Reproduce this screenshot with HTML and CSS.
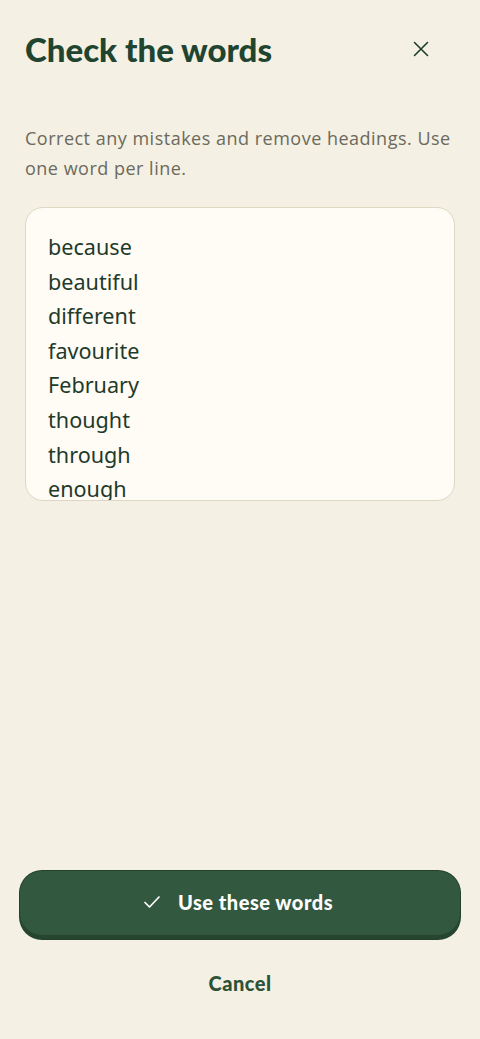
FILE: index.html
```html
<!DOCTYPE html>
<html lang="en">
<head>
<meta charset="utf-8">
<title>Check the words</title>
<link rel="stylesheet" href="styles.css">
</head>
<body>
<main class="sheet">
  <header class="head">
    <h1 class="title">Check the words</h1>
    <button class="close" aria-label="Close">
      <svg width="16" height="16" viewBox="0 0 16 16" fill="none" stroke="#1f3d2c" stroke-width="1.6" stroke-linecap="round"><path d="M1.5 1.5 L14.5 14.5 M14.5 1.5 L1.5 14.5"/></svg>
    </button>
  </header>
  <p class="hint">Correct any mistakes and remove headings. Use one word per line.</p>
  <textarea class="words" spellcheck="false">because
beautiful
different
favourite
February
thought
through
enough
friend
people</textarea>
  <div class="spacer"></div>
  <div class="actions">
    <button class="primary">
      <svg width="18" height="14" viewBox="0 0 18 14" fill="none" stroke="#ffffff" stroke-width="1.7" stroke-linecap="round" stroke-linejoin="round"><path d="M2 7.5 L6.5 12 L16 2"/></svg>
      <span>Use these words</span>
    </button>
    <button class="cancel">Cancel</button>
  </div>
</main>
</body>
</html>
```
FILE: styles.css
```css
* { box-sizing: border-box; }
html, body { margin: 0; padding: 0; }
body {
  background: #f4f0e4;
  font-family: "Open Sans", "Noto Sans", sans-serif;
  width: 480px;
  height: 1039px;
  overflow: hidden;
}
.sheet {
  display: flex;
  flex-direction: column;
  height: 1039px;
  padding: 26px 20px 0 25px;
}
.head {
  display: flex;
  align-items: center;
  justify-content: space-between;
  height: 46px;
}
.title {
  margin: 0;
  font-family: "Lato", sans-serif;
  font-weight: 900;
  font-size: 33px;
  letter-spacing: 0;
  color: #1f4430;
}
.close {
  width: 44px;
  height: 44px;
  margin-right: 17px;
  border: 0;
  background: transparent;
  display: flex;
  align-items: center;
  justify-content: center;
  padding: 0;
}
.hint {
  margin: 51px 0 0 0;
  font-size: 18px;
  letter-spacing: 0.5px;
  line-height: 30px;
  color: #6b6a5c;
  padding-right: 4px;
}
.words {
  margin-top: 24px;
  width: 430px;
  height: 294px;
  border: 1px solid #ddd7c3;
  border-radius: 18px;
  background: #fefcf5;
  padding: 22px 22px 0 22px;
  font-family: "Noto Sans", sans-serif;
  font-size: 21.6px;
  line-height: 34.6px;
  color: #1f3a2b;
  resize: none;
  overflow: hidden;
  outline: none;
  display: block;
}
.spacer { flex: 1; }
.actions {
  display: flex;
  flex-direction: column;
  align-items: center;
  margin-left: -5px;
  padding-bottom: 40px;
}
.primary {
  width: 440px;
  height: 68px;
  border: 0;
  border-radius: 22px;
  background: #335840;
  box-shadow: inset 0 -4px 0 #25452f, 0 0 0 1px #24412e;
  display: flex;
  align-items: center;
  justify-content: center;
  gap: 17px;
  color: #ffffff;
  font-family: "Lato", sans-serif;
  font-weight: 900;
  font-size: 20px;
  letter-spacing: 0.5px;
  padding: 0 0 6px 0;
}
.primary svg { margin-left: -4px; }
.cancel {
  margin-top: 28px;
  border: 0;
  background: transparent;
  font-family: "Lato", sans-serif;
  font-weight: 900;
  font-size: 20px;
  letter-spacing: 0.5px;
  color: #2c5238;
  padding: 0;
  height: 32px;
}
```
